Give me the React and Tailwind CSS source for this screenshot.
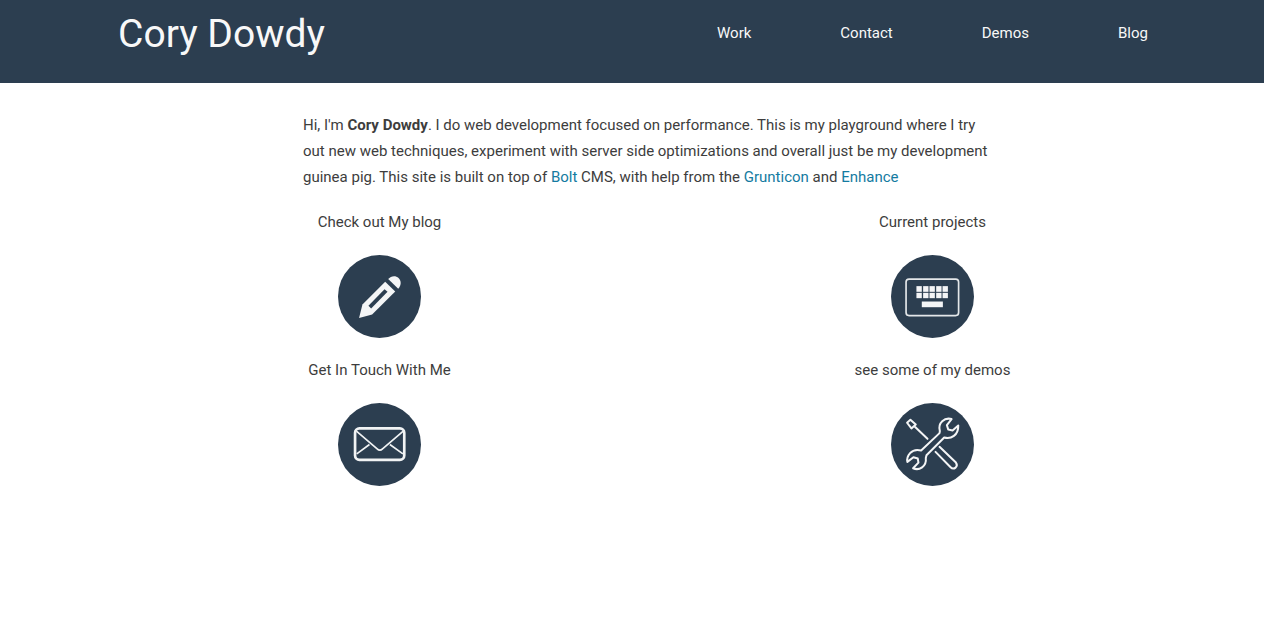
const navItems = ["Work", "Contact", "Demos", "Blog"];

function Pencil() {
  return (
    <svg viewBox="10 14 248 248" className="size-[83px]" aria-hidden="true">
      <circle cx="134" cy="138" r="124" fill="#2c3e50" />
      <g fill="#f4f5f6">
        <path d="M73 202L83 162L151 94L181 123L112 192Z" />
        <path d="M160 86C168 76 182 74 191 83C200 92 199 105 190 115Z" />
      </g>
      <path d="M101 166L149 116L158 124L109 174Z" fill="#2c3e50" />
    </svg>
  );
}

function Keyboard() {
  return (
    <svg viewBox="12 14 248 248" className="size-[83px]" aria-hidden="true">
      <circle cx="136" cy="138" r="124" fill="#2c3e50" />
      <rect x="57" y="86" width="157" height="109" rx="9" fill="none" stroke="#e4e7e9" strokeWidth="5" />
      <g fill="#f4f5f6">
        {[88, 108, 127, 147, 166].map((x) => (
          <g key={x}>
            <rect x={x} y="107" width="16" height="17" />
            <rect x={x} y="127" width="16" height="16" />
          </g>
        ))}
        <rect x="104" y="153" width="63" height="17" />
      </g>
    </svg>
  );
}

function Envelope() {
  return (
    <svg viewBox="10 12 248 248" className="size-[83px]" aria-hidden="true">
      <circle cx="134" cy="136" r="124" fill="#2c3e50" />
      <g fill="none" stroke="#f1f3f4" strokeLinejoin="round">
        <rect x="61" y="88" width="147" height="94" rx="13" strokeWidth="8" />
        <path d="M65 96L127 149Q135 157 143 149L205 96M66 164L104 136M204 164L165 136" strokeWidth="5" />
      </g>
    </svg>
  );
}

function Tools() {
  return (
    <svg viewBox="12 12 248 248" className="size-[83px]" aria-hidden="true">
      <circle cx="136" cy="136" r="124" fill="#2c3e50" />
      <g fill="none" stroke="#f4f5f6" strokeWidth="6" strokeLinejoin="round" strokeLinecap="round">
        <path d="M70 62L60 71L73 88L86 76ZM81 81L121 119" />
        <path d="M157 143L206 190Q212 198 205 205Q197 211 190 204L145 158" />
        <path d="M193 60C172 54 151 72 158 96L157 102L102 154C91 151 77 153 69 162C62 170 59 180 61 188L79 174L92 178L94 190L78 207C96 215 119 202 116 176L118 168L171 115C191 121 214 108 213 79L196 94L183 91L179 78Z" />
      </g>
    </svg>
  );
}

const cards = [
  { label: "Check out My blog", Icon: Pencil },
  { label: "Current projects", Icon: Keyboard },
  { label: "Get In Touch With Me", Icon: Envelope },
  { label: "see some of my demos", Icon: Tools },
];

export default function App() {
  return (
    <div className="min-h-screen bg-white font-['Roboto','Liberation_Sans',sans-serif] text-[#3d3d3d]">
      <header className="bg-[#2c3e50] text-[#f8f8f8]">
        <div className="mx-auto flex w-full max-w-[1032px] flex-wrap items-start justify-between pt-2 pb-[23px] pl-0.5">
          <h1 className="text-[39px] leading-[52px]">Cory Dowdy</h1>
          <nav aria-label="Main" className="pt-3">
            <ul className="flex gap-[89px] text-[15px] leading-[26px]">
              {navItems.map((item) => (
                <li key={item}>
                  <a href={`#${item.toLowerCase()}`}>{item}</a>
                </li>
              ))}
            </ul>
          </nav>
        </div>
      </header>
      <main className="mx-auto w-full max-w-[1032px] pt-[29px] text-[15px] leading-[26px]">
        <div className="ml-auto w-full max-w-[845px]">
          <div className="max-w-[706px]">
            <p className="max-w-[694px]">
              Hi, I'm <strong className="font-bold">Cory Dowdy</strong>. I do web development focused on performance. This
              is my playground where I try out new web techniques, experiment with server side optimizations and overall
              just be my development guinea pig. This site is built on top of{" "}
              <a href="#bolt" className="text-[#147ba1]">Bolt</a> CMS, with help from the{" "}
              <a href="#grunticon" className="text-[#147ba1]">Grunticon</a> and{" "}
              <a href="#enhance" className="text-[#147ba1]">Enhance</a>
            </p>
            <ul className="mt-[19px] grid grid-cols-[153px_153px] justify-between gap-y-[19px]">
              {cards.map(({ label, Icon }) => (
                <li key={label}>
                  <a href="#section" className="flex flex-col items-center gap-5 whitespace-nowrap">
                    {label}
                    <Icon />
                  </a>
                </li>
              ))}
            </ul>
          </div>
        </div>
      </main>
    </div>
  );
}
